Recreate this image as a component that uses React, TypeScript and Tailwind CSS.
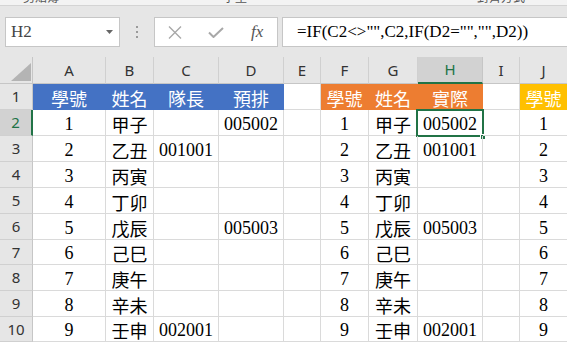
import React from "react";

const COLS =
  "grid grid-cols-[33px_73px_48px_65px_65px_37px_48px_49px_65px_37px_48px]";
const CJK = "font-['Noto_Sans_CJK_TC','Noto_Sans_CJK_SC',sans-serif]";
const SERIF = "font-['Liberation_Serif','Noto_Sans_CJK_TC',serif]";
const UI = "font-['Noto_Sans','Liberation_Sans',sans-serif]";

const names = ["甲子", "乙丑", "丙寅", "丁卯", "戊辰", "己巳", "庚午", "辛未", "壬申"];
const colC: Record<number, string> = { 1: "001001", 8: "002001" };
const colD: Record<number, string> = { 0: "005002", 4: "005003" };
const colH: Record<number, string> = { 0: "005002", 1: "001001", 4: "005003", 8: "002001" };
const rowH = [
  "h-[26px]",
  "h-[26px]",
  "h-[26px]",
  "h-[26px]",
  "h-[26px]",
  "h-[26px]",
  "h-[25px]",
  "h-[26px]",
  "h-[26px]",
  "h-[25px]",
];

function Cell({
  children,
  border = "border-[#dadada]",
  extra = "",
}: {
  children?: React.ReactNode;
  border?: string;
  extra?: string;
}) {
  return (
    <div
      className={`relative flex items-end justify-center whitespace-nowrap border-r border-b ${border} text-[18px] leading-[21px] ${extra}`}
    >
      {children}
    </div>
  );
}

function RowHead({ n, selected }: { n: number; selected?: boolean }) {
  return (
    <div
      className={`flex items-center justify-center border-b border-b-[#d0d0d0] ${UI} text-[15px] ${
        selected
          ? "bg-[#d2d2d2] text-[#217346] border-r-2 border-r-[#217346]"
          : "bg-[#e6e6e6] text-[#333] border-r border-r-[#c6c6c6]"
      }`}
    >
      {n}
    </div>
  );
}

export default function App() {
  const letters = ["A", "B", "C", "D", "E", "F", "G", "H", "I", "J"];
  return (
    <div className="w-[567px] h-[343px] overflow-hidden bg-white">
      {/* ribbon remnant */}
      <div className="h-[6px] bg-[#f3f3f3] border-b border-[#d4d4d4] overflow-hidden">
        <div className={`flex -mt-[10px] text-[12px] leading-[14px] text-[#555] ${CJK}`}>
          <span className="ml-[23px]">剪貼簿</span>
          <span className="ml-[164px]">字型</span>
          <span className="ml-[230px]">對齊方式</span>
        </div>
      </div>

      {/* formula bar */}
      <div className="h-[51px] bg-[#e6e6e6] flex items-start pt-[11px] overflow-hidden">
        <div className="ml-[5px] w-[115px] h-[30px] shrink-0 bg-white border border-[#c6c6c6] flex items-center pl-[5px]">
          <span className={`${SERIF} text-[17px] text-[#444]`}>H2</span>
          <svg className="ml-auto mr-[6px]" width="7" height="4" viewBox="0 0 7 4">
            <polygon points="0,0 7,0 3.5,4" fill="#666" />
          </svg>
        </div>
        <div className="w-[34px] h-[30px] shrink-0 flex flex-col items-center justify-center gap-[3px]">
          <div className="w-[2px] h-[2px] bg-[#9a9a9a]" />
          <div className="w-[2px] h-[2px] bg-[#9a9a9a]" />
          <div className="w-[2px] h-[2px] bg-[#9a9a9a]" />
        </div>
        <div className="w-[124px] h-[30px] shrink-0 bg-white border border-[#c6c6c6] flex items-center">
          <svg className="ml-[13px]" width="14" height="13" viewBox="0 0 14 13">
            <path d="M1 0.5 L13 12.5 M13 0.5 L1 12.5" stroke="#a8a8a8" strokeWidth="1.4" fill="none" />
          </svg>
          <svg className="ml-[26px]" width="16" height="11" viewBox="0 0 16 11">
            <path d="M1 5.5 L5.5 10 L15 1" stroke="#a8a8a8" strokeWidth="2" fill="none" />
          </svg>
          <span className={`ml-[27px] italic ${SERIF} text-[17px] text-[#555]`}>fx</span>
        </div>
        <div className="ml-[4px] w-[300px] h-[30px] shrink-0 bg-white border border-[#c6c6c6] flex items-center pl-[14px]">
          <span className={`${SERIF} text-[17px] text-black whitespace-nowrap`}>
            =IF(C2&lt;&gt;"",C2,IF(D2="","",D2))
          </span>
        </div>
      </div>

      {/* column headers */}
      <div className={`${COLS} h-[27px] bg-[#e6e6e6]`}>
        <div className="flex items-end justify-end pr-[1px] pb-[2px] border-r border-b border-[#c6c6c6]">
          <svg width="20" height="18" viewBox="0 0 20 18">
            <polygon points="20,0 20,18 0,18" fill="#b4b4b4" />
          </svg>
        </div>
        {letters.map((l) =>
          l === "H" ? (
            <div
              key={l}
              className={`flex items-center justify-center bg-[#d2d2d2] text-[#217346] border-r border-r-[#c6c6c6] border-b-2 border-b-[#217346] ${UI} text-[15px]`}
            >
              {l}
            </div>
          ) : (
            <div
              key={l}
              className={`flex items-center justify-center text-[#333] border-r border-r-[#d0d0d0] border-b border-b-[#c6c6c6] ${UI} text-[15px]`}
            >
              {l}
            </div>
          )
        )}
      </div>

      {/* row 1 headers */}
      <div className={`${COLS} ${rowH[0]}`}>
        <RowHead n={1} />
        <Cell border="border-[#4472c4]" extra={`bg-[#4472c4] text-white ${CJK}`}>學號</Cell>
        <Cell border="border-[#4472c4]" extra={`bg-[#4472c4] text-white ${CJK}`}>姓名</Cell>
        <Cell border="border-[#4472c4]" extra={`bg-[#4472c4] text-white ${CJK}`}>隊長</Cell>
        <Cell border="border-[#4472c4]" extra={`bg-[#4472c4] text-white ${CJK}`}>預排</Cell>
        <Cell />
        <Cell border="border-[#ed7d31]" extra={`bg-[#ed7d31] text-white ${CJK}`}>學號</Cell>
        <Cell border="border-[#ed7d31]" extra={`bg-[#ed7d31] text-white ${CJK}`}>姓名</Cell>
        <Cell border="border-[#ed7d31]" extra={`bg-[#ed7d31] text-white ${CJK}`}>實際</Cell>
        <Cell />
        <Cell border="border-[#ffc000]" extra={`bg-[#ffc000] text-white ${CJK}`}>學號</Cell>
      </div>

      {names.map((nm, i) => (
        <div key={i} className={`${COLS} ${rowH[i + 1]}`}>
          <RowHead n={i + 2} selected={i === 0} />
          <Cell extra={`${SERIF} text-black`}>{i + 1}</Cell>
          <Cell extra={`${CJK} text-black`}>{nm}</Cell>
          <Cell extra={`${SERIF} text-black`}>{colC[i] ?? ""}</Cell>
          <Cell extra={`${SERIF} text-black`}>{colD[i] ?? ""}</Cell>
          <Cell />
          <Cell extra={`${SERIF} text-black`}>{i + 1}</Cell>
          <Cell extra={`${CJK} text-black`}>{nm}</Cell>
          <Cell extra={`${SERIF} text-black`}>
            {colH[i] ?? ""}
            {i === 0 && (
              <>
                <div className="absolute left-[-2px] top-[-1px] w-[68px] h-[28px] border-2 border-[#217346] pointer-events-none" />
                <div className="absolute left-[62px] top-[24px] w-[6px] h-[6px] bg-[#217346] border border-white" />
              </>
            )}
          </Cell>
          <Cell />
          <Cell extra={`${SERIF} text-black`}>{i + 1}</Cell>
        </div>
      ))}
    </div>
  );
}
